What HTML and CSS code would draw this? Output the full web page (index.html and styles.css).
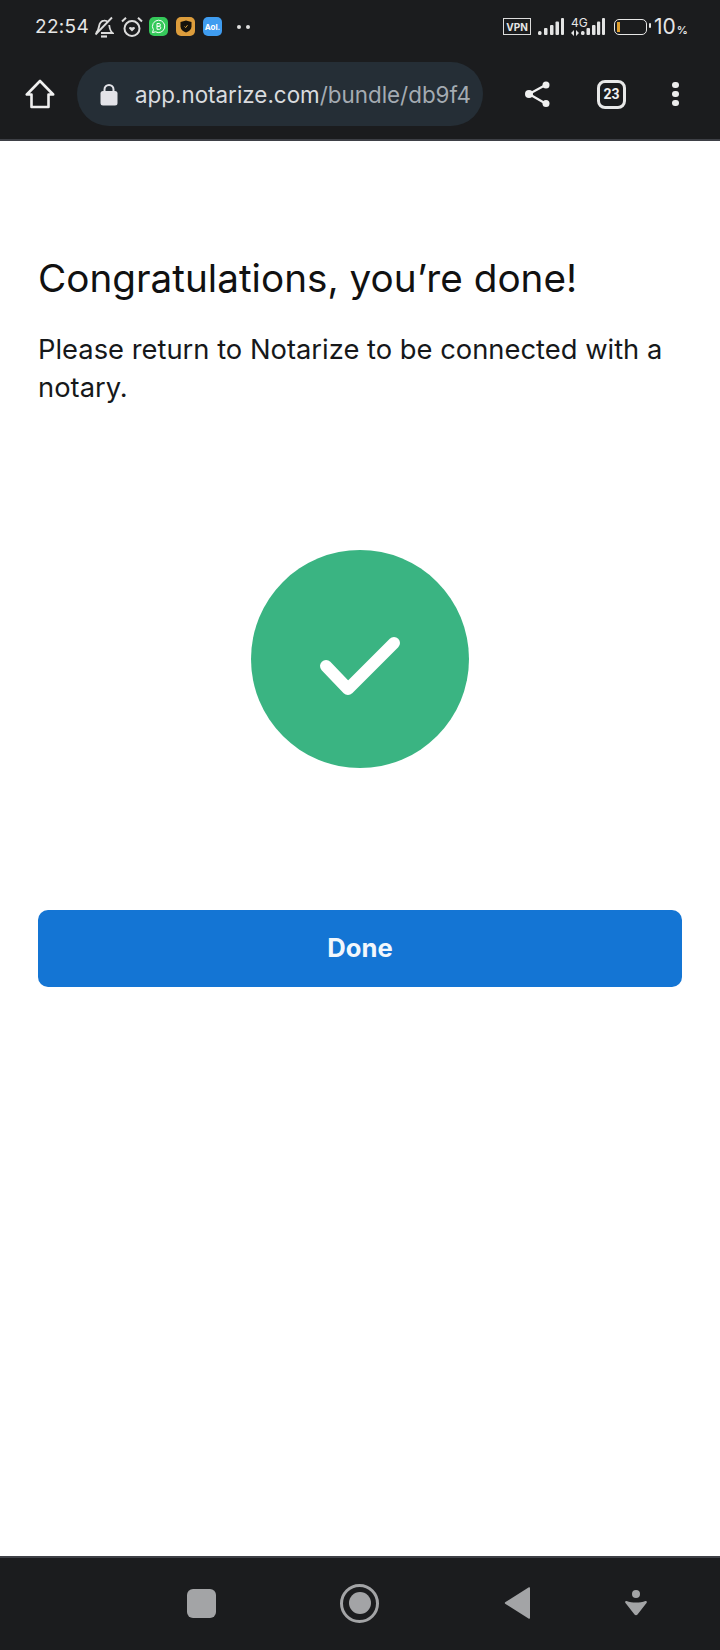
FILE: index.html
```html
<!DOCTYPE html>
<html lang="en">
<head>
    <meta charset="UTF-8">
    <meta name="viewport" content="width=device-width, initial-scale=1.0">
    <title>Notarize</title>
    <link rel="stylesheet" href="styles.css">
</head>
<body>

<div class="status-bar">
    <div class="status-left">
        <span class="time">22:54</span>
        <svg class="bell" width="20" height="22" viewBox="0 0 20 22" fill="none" stroke="#dcdcdc" stroke-width="1.800">
            <path d="M2 17c2-1.500 2.500-3.500 3-6.500.5-3 2-5.500 5-5.800 1.500-.2 3 .3 4 1.500M15.200 9c.4 3 1.200 6.300 3.300 8H7"/>
            <path d="M1.500 18.500 18 1.500"/>
            <path d="M7 20.500h6" stroke-width="2.200"/>
        </svg>
        <svg class="alarm" width="22" height="22" viewBox="0 0 22 22" fill="none" stroke="#dcdcdc" stroke-width="2">
            <circle cx="11" cy="12.500" r="7.500"/>
            <path d="M1 5.500 5 1.800M21 5.500 17 1.800"/>
            <path d="M11 15.500 8.300 12.800c-1-1.200.8-2.800 2.700-1.200 1.900-1.600 3.700 0 2.700 1.200z" fill="#dcdcdc" stroke="none"/>
        </svg>
        <span class="app-badge badge-green">
            <svg width="15" height="15" viewBox="0 0 15 15" fill="none" stroke="#fff" stroke-width="1">
                <path d="M7.500 1.200a6.200 6.200 0 1 1-3 11.600L1.500 13.600l.9-2.900A6.200 6.200 0 0 1 7.500 1.200z"/>
                <path d="M6 4.500h2.200c1.600 0 1.600 2.800 0 2.800H6h2.500c1.700 0 1.700 3 0 3H6z"/>
            </svg>
        </span>
        <span class="app-badge badge-orange">
            <svg width="12" height="13" viewBox="0 0 12 13">
                <path d="M6 .5 11.500 2v4.500c0 3-2.500 5-5.500 6-3-1-5.500-3-5.500-6V2z" fill="#15120c"/>
                <path d="M4.500 6.500 5.700 7.600 7.500 5.200" fill="none" stroke="#d8a13f" stroke-width="1"/>
            </svg>
        </span>
        <span class="app-badge badge-blue">Aol.</span>
        <span class="more-dots"><i></i><i></i></span>
    </div>
    <div class="status-right">
        <span class="vpn">VPN</span>
        <svg class="signal" width="26" height="17" viewBox="0 0 26 17" fill="#e4e4e4">
            <rect x="0" y="13" width="3.500" height="4" rx="1.500"/>
            <rect x="6" y="10" width="3.500" height="7" rx="1"/>
            <rect x="12" y="7" width="3.500" height="10" rx="1"/>
            <rect x="17.500" y="3.500" width="3.500" height="13.500" rx="1"/>
            <rect x="23" y="0" width="3" height="17" rx="1"/>
        </svg>
        <span class="net">
            <span class="net-label">4G</span>
            <svg class="net-arrows" width="8" height="6" viewBox="0 0 8 6" fill="#e4e4e4">
                <path d="M0 3 3 0v6zM8 3 5 0v6z"/>
            </svg>
        </span>
        <svg class="signal2" width="24" height="17" viewBox="0 0 24 17" fill="#e4e4e4">
            <rect x="0" y="13" width="3.500" height="4" rx="1.500"/>
            <rect x="5.500" y="10" width="3.500" height="7" rx="1"/>
            <rect x="11" y="7" width="3.500" height="10" rx="1"/>
            <rect x="16" y="3.500" width="3.200" height="13.500" rx="1"/>
            <rect x="21" y="0" width="3" height="17" rx="1"/>
        </svg>
        <span class="battery"><i></i></span>
        <span class="battery-level">10<small>%</small></span>
    </div>
</div>

<div class="toolbar">
    <svg class="home" width="30" height="30" viewBox="0 0 30 30" fill="none" stroke="#f0f0f0" stroke-width="2.600" stroke-linejoin="round">
        <path d="M15 2 1.800 15.500H6.500V28H23.500V15.500H28.200Z"/>
    </svg>
    <div class="address">
        <svg class="lock" width="18" height="23" viewBox="0 0 18 23">
            <path d="M4.500 9V6.500a4.500 4.500 0 0 1 9 0V9" fill="none" stroke="#e3e3e8" stroke-width="2"/>
            <rect x="0.500" y="8" width="17" height="14.500" rx="2.500" fill="#e3e3e8"/>
        </svg>
        <span class="url">app.notarize.com<span class="url-path">/bundle/db9f4</span></span>
    </div>
    <svg class="share" width="28" height="28" viewBox="0 0 28 28" fill="#f0f0f0" stroke="#f0f0f0">
        <path d="M21.500 5 5 14l16.500 9.500" fill="none" stroke-width="2.200"/>
        <circle cx="22" cy="5" r="3.500" stroke="none"/>
        <circle cx="5" cy="14" r="4" stroke="none"/>
        <circle cx="22" cy="23.500" r="3.500" stroke="none"/>
    </svg>
    <span class="tabs">23</span>
    <span class="menu"><i></i><i></i><i></i></span>
</div>

<div class="content">
    <h1 class="title">Congratulations, you’re done!</h1>
    <p class="message">Please return to Notarize to be connected with a notary.</p>
    <div class="check-circle">
        <svg width="90" height="80" viewBox="0 0 90 80" fill="none" stroke="#fff" stroke-width="12" stroke-linecap="round" stroke-linejoin="round">
            <path d="M11 47 33 70 79 24"/>
        </svg>
    </div>
    <button class="done">Done</button>
</div>

<div class="nav-bar">
    <span class="nav-square"></span>
    <span class="nav-home"><i></i></span>
    <svg class="nav-back" width="27" height="34" viewBox="0 0 26 34">
        <path d="M24 1.500c1-.6 1.500 0 1.500 1v29c0 1-.5 1.600-1.500 1L1 18c-1-.6-1-1.400 0-2z" fill="#a3a4a6"/>
    </svg>
    <svg class="nav-access" width="22" height="26" viewBox="0 0 22 26" fill="#a3a4a6">
        <circle cx="11" cy="4" r="4"/>
        <path d="M1.500 11c3 1 6 1.500 9.500 1.500s6.500-.5 9.500-1.500c1.200-.3 1.800.8 1 2L12.500 24.500c-.8 1-2.200 1-3 0L.500 13c-.8-1.200-.2-2.300 1-2z"/>
    </svg>
</div>

</body>
</html>
```
FILE: styles.css
```css
body {
    font-family: 'Inter', sans-serif;
    margin: 0;
    width: 720px;
    height: 1650px;
    display: flex;
    flex-direction: column;
    background-color: #1b1c1e;
}
i {
    display: block;
}
svg {
    flex-shrink: 0;
}
.status-bar {
    height: 51px;
    display: flex;
    justify-content: space-between;
    align-items: center;
    color: #e6e6e6;
    box-sizing: border-box;
    padding: 2px 34px 0 35px;
}
.status-left,
.status-right {
    display: flex;
    align-items: center;
}
.time {
    font-size: 19px;
    letter-spacing: 0.3px;
    width: 59px;
}
.bell {
    margin-right: 7px;
}
.alarm {
    margin-right: 6px;
}
.app-badge {
    width: 19px;
    height: 19px;
    border-radius: 5px;
    margin-right: 8px;
    display: flex;
    justify-content: center;
    align-items: center;
    color: #fff;
}
.badge-green {
    background-color: #35c95a;
}
.badge-orange {
    background-color: #dd9d3c;
}
.badge-blue {
    background-color: #3f9cf0;
    font-size: 8px;
    font-weight: 700;
}
.more-dots {
    display: flex;
    gap: 5px;
    margin-left: 7px;
}
.more-dots i {
    width: 4px;
    height: 4px;
    border-radius: 50%;
    background-color: #e0e0e0;
}
.vpn {
    width: 28px;
    height: 17px;
    box-sizing: border-box;
    border: 1.500px solid #dcdcdc;
    font-size: 10px;
    font-weight: 700;
    display: flex;
    justify-content: center;
    align-items: center;
    margin-right: 7px;
}
.signal {
    margin-right: 7px;
}
.net {
    width: 10px;
    height: 18px;
    display: flex;
    flex-direction: column;
    align-items: flex-start;
    justify-content: space-between;
    white-space: nowrap;
}
.net-label {
    font-size: 12px;
    line-height: 10px;
}
.battery {
    width: 33px;
    height: 16px;
    box-sizing: border-box;
    border: 1.500px solid #e6e6e6;
    border-radius: 5px;
    margin-left: 9px;
    padding: 2px 1.500px;
    position: relative;
}
.battery::after {
    content: '';
    position: absolute;
    right: -5px;
    top: 3.500px;
    width: 2px;
    height: 5px;
    background-color: #e6e6e6;
    border-radius: 1px;
}
.battery i {
    width: 3px;
    height: 100%;
    background-color: #e0a030;
}
.battery-level {
    font-size: 21px;
    margin-left: 7px;
    width: 32px;
    white-space: nowrap;
}
.battery-level small {
    font-size: 11px;
    font-weight: 600;
    margin-left: 1px;
}
.toolbar {
    height: 88px;
    display: flex;
    align-items: center;
    padding-left: 25px;
    padding-bottom: 2px;
    box-sizing: border-box;
}
.address {
    width: 406px;
    height: 64px;
    box-sizing: border-box;
    border-radius: 32px;
    background-color: #252e36;
    margin-left: 22px;
    padding-left: 23px;
    display: flex;
    align-items: center;
}
.url {
    font-size: 22.400px;
    color: #d9dbdf;
    margin-left: 17px;
    white-space: nowrap;
}
.url-path {
    color: #a4abb2;
}
.share {
    margin-left: 41px;
}
.tabs {
    width: 29px;
    height: 29px;
    box-sizing: border-box;
    border: 3px solid #e8e8e8;
    border-radius: 8px;
    font-family: 'Roboto', sans-serif;
    font-size: 14px;
    font-weight: 700;
    color: #f0f0f0;
    display: flex;
    justify-content: center;
    align-items: center;
    margin-left: 45px;
}
.menu {
    display: flex;
    flex-direction: column;
    gap: 2.500px;
    margin-left: 46px;
}
.menu i {
    width: 6.500px;
    height: 6.500px;
    border-radius: 50%;
    background-color: #ececec;
}
.content {
    flex: 1;
    background-color: #fff;
    border-top: 2px solid #3e4046;
    border-bottom: 2px solid #3e4046;
    padding: 112px 38px 0;
    display: flex;
    flex-direction: column;
}
.title {
    font-size: 38.700px;
    font-weight: 400;
    line-height: 50px;
    color: #111;
    margin: 0;
}
.message {
    font-size: 27.350px;
    line-height: 38px;
    color: #16181a;
    margin: 28px 0 0;
}
.check-circle {
    width: 218px;
    height: 218px;
    border-radius: 50%;
    background-color: #3ab482;
    align-self: center;
    margin-top: 143px;
    display: flex;
    justify-content: center;
    align-items: center;
}
.done {
    height: 77px;
    margin-top: 142px;
    padding-bottom: 3px;
    border: none;
    border-radius: 10px;
    background-color: #1475d4;
    color: #f2f7fc;
    font-family: 'Inter', sans-serif;
    font-size: 25.600px;
    font-weight: 700;
}
.nav-bar {
    height: 92px;
    display: flex;
    align-items: center;
    padding-left: 187px;
    padding-bottom: 2px;
    box-sizing: border-box;
}
.nav-square {
    width: 29px;
    height: 29px;
    border-radius: 6px;
    background-color: #a3a4a6;
}
.nav-home {
    width: 39px;
    height: 39px;
    box-sizing: border-box;
    border: 3px solid #a3a4a6;
    border-radius: 50%;
    margin-left: 124px;
    padding: 5.500px;
}
.nav-home i {
    width: 22px;
    height: 22px;
    border-radius: 50%;
    background-color: #a3a4a6;
}
.nav-back {
    margin-left: 125px;
}
.nav-access {
    margin-left: 94px;
}
```
